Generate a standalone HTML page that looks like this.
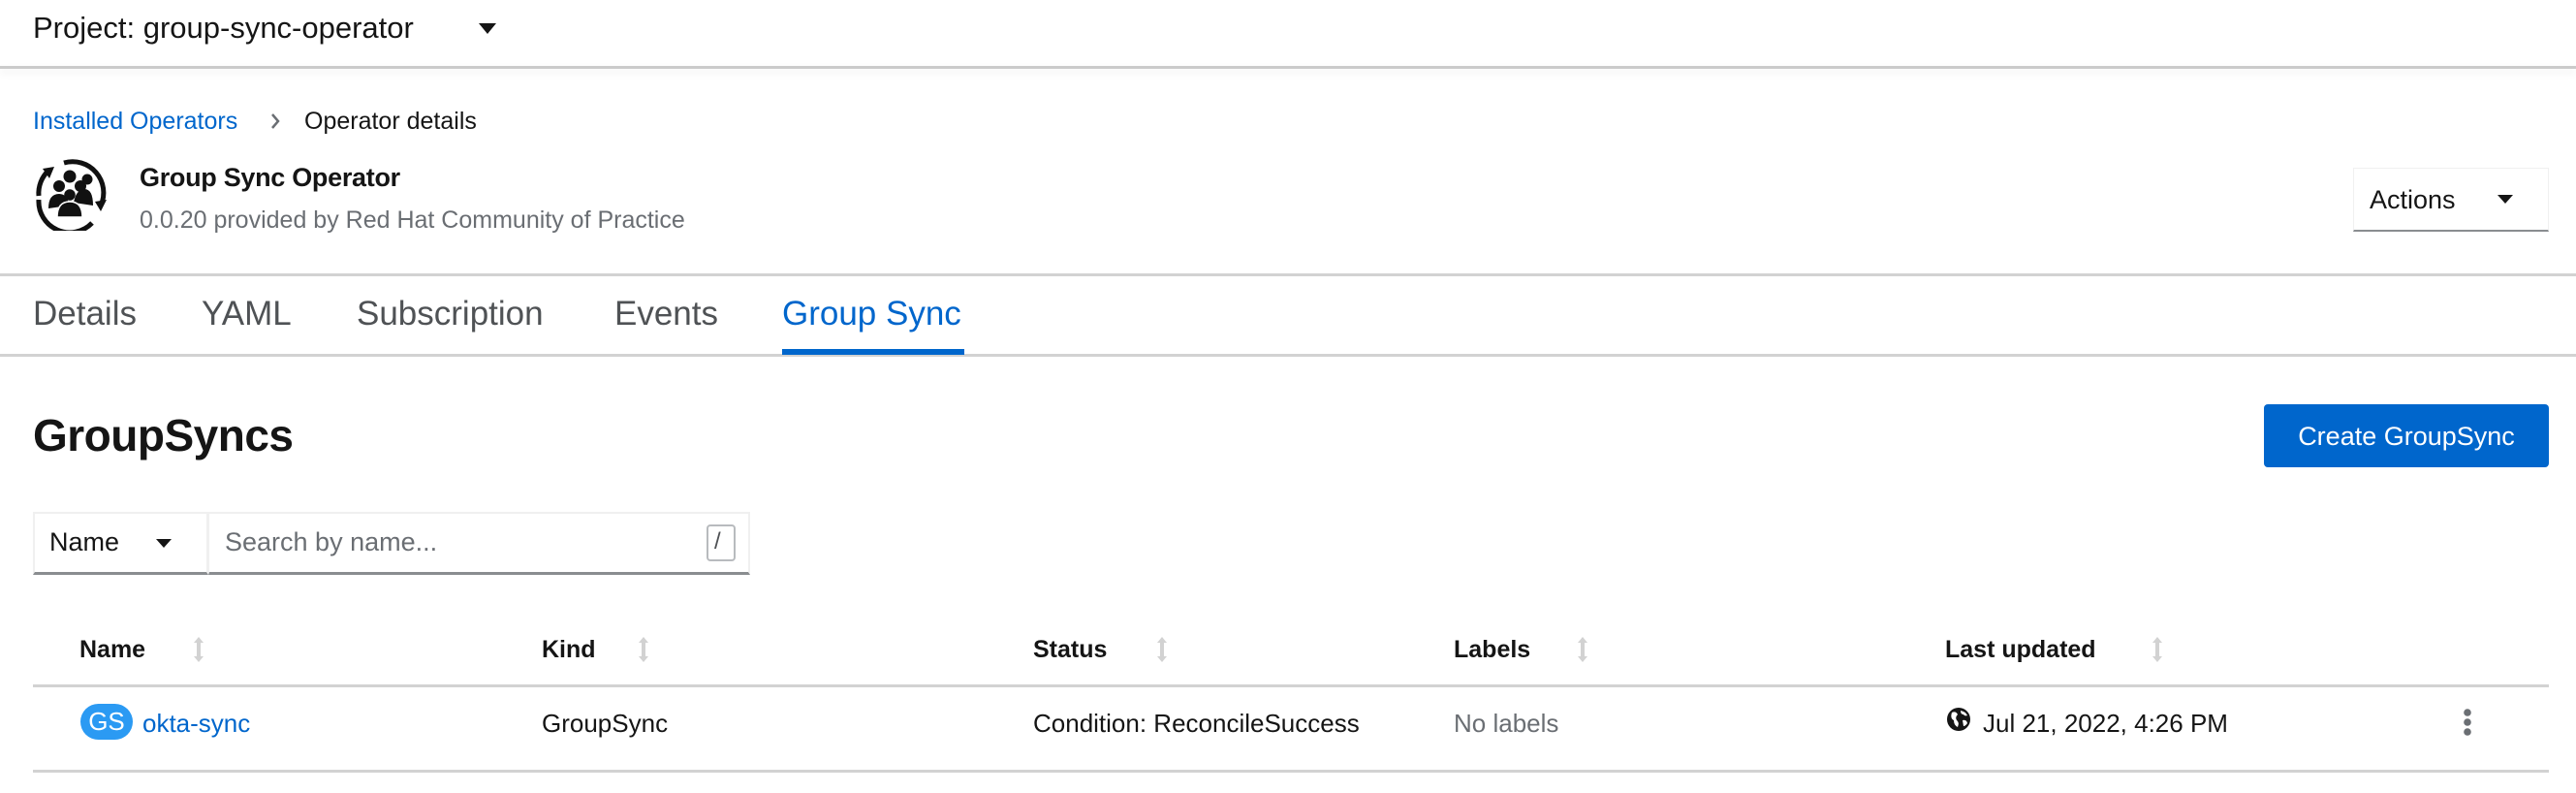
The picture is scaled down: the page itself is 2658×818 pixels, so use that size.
<!DOCTYPE html>
<html><head><meta charset="utf-8"><style>
*{margin:0;padding:0;box-sizing:border-box}
body{width:2658px;height:818px;background:#fff;position:relative;overflow:hidden;font-family:"Liberation Sans",sans-serif;color:#151515}
.a{position:absolute;white-space:nowrap}
.hl{position:absolute;height:3px;background:#d2d2d2}
.caret{position:absolute;width:0;height:0;border-left:8px solid transparent;border-right:8px solid transparent;border-top:9px solid #151515}
.sort{position:absolute;width:14px;height:30px}
</style></head><body>
<div class="a" style="left:34px;top:11px;font-size:31px;line-height:36px">Project: group-sync-operator</div>
<div class="caret" style="left:494px;top:24px;border-left-width:9px;border-right-width:9px;border-top-width:11px"></div>
<div style="position:absolute;left:0;top:68px;width:2658px;height:3px;background:#cbcbcb;box-shadow:0 4px 8px rgba(0,0,0,0.08)"></div>

<div class="a" style="left:34px;top:110px;font-size:25px;line-height:30px;color:#06c">Installed Operators</div>
<svg class="a" style="left:278px;top:115px" width="12" height="20" viewBox="0 0 12 20"><path d="M3 3 L9 10 L3 17" fill="none" stroke="#6a6e73" stroke-width="2.5"/></svg>
<div class="a" style="left:314px;top:110px;font-size:25px;line-height:30px">Operator details</div>

<svg class="a" style="left:34px;top:162px" width="78" height="76" viewBox="0 0 78 76">
<path d="M32 6 A32 32 0 0 1 70 50" fill="none" stroke="#111" stroke-width="5"/>
<path d="M64 46 L76 44 L70 56 Z" fill="#111"/>
<path d="M61 68 A32 32 0 0 1 6 44" fill="none" stroke="#111" stroke-width="5"/>
<path d="M6 40 A32 32 0 0 1 16 14" fill="none" stroke="#111" stroke-width="5"/>
<path d="M10 12 L22 10 L17 22 Z" fill="#111"/>
<circle cx="38" cy="20" r="6.5" fill="#111"/>
<circle cx="27" cy="30" r="6" fill="#111"/><circle cx="49" cy="30" r="6" fill="#111"/>
<circle cx="56" cy="23" r="5.5" fill="#111"/>
<circle cx="38" cy="39" r="6.5" stroke="#fff" stroke-width="1.5" fill="#111"/>
<path d="M16 53 Q16 38 27 38 Q36 38 37 50 Z" fill="#111"/>
<path d="M62 50 Q62 32 52 33 Q44 35 42 47 Z" fill="#111"/>
<path d="M25 62 Q25 46 38 46 Q51 46 51 62 Z" stroke="#fff" stroke-width="1.5" fill="#111"/>
</svg>
<div class="a" style="left:144px;top:167px;font-size:27px;line-height:32px;font-weight:bold;letter-spacing:-0.3px">Group Sync Operator</div>
<div class="a" style="left:144px;top:212px;font-size:25px;line-height:30px;color:#6a6e73">0.0.20 provided by Red Hat Community of Practice</div>

<div style="position:absolute;left:2428px;top:173px;width:202px;height:66px;border:1px solid #f0f0f0;border-bottom:2px solid #8a8d90"></div>
<div class="a" style="left:2445px;top:190px;font-size:27px;line-height:32px">Actions</div>
<div class="caret" style="left:2577px;top:201px"></div>

<div class="hl" style="left:0;top:282px;width:2658px"></div>
<div class="a" style="left:34px;top:304px;font-size:35px;line-height:40px;color:#4f5255">Details</div>
<div class="a" style="left:208px;top:304px;font-size:35px;line-height:40px;color:#4f5255">YAML</div>
<div class="a" style="left:368px;top:304px;font-size:35px;line-height:40px;color:#4f5255">Subscription</div>
<div class="a" style="left:634px;top:304px;font-size:35px;line-height:40px;color:#4f5255">Events</div>
<div class="a" style="left:807px;top:304px;font-size:35px;line-height:40px;color:#06c">Group Sync</div>
<div class="hl" style="left:0;top:365px;width:2658px"></div>
<div style="position:absolute;left:807px;top:360px;width:188px;height:6px;background:#06c"></div>

<div class="a" style="left:34px;top:421px;font-size:46px;line-height:56px;font-weight:bold;letter-spacing:-0.5px">GroupSyncs</div>
<div style="position:absolute;left:2336px;top:417px;width:294px;height:65px;background:#06c;border-radius:4px"></div>
<div class="a" style="left:2336px;top:434px;width:294px;text-align:center;font-size:27px;line-height:32px;color:#fff">Create GroupSync</div>

<div style="position:absolute;left:34px;top:528px;width:181px;height:65px;border:2px solid #f0f0f0;border-bottom:3px solid #8a8d90"></div>
<div style="position:absolute;left:215px;top:528px;width:559px;height:65px;border:2px solid #f0f0f0;border-bottom:3px solid #8a8d90;border-left:1px solid #f0f0f0"></div>
<div class="a" style="left:51px;top:543px;font-size:27px;line-height:32px">Name</div>
<div class="caret" style="left:161px;top:556px"></div>
<div class="a" style="left:232px;top:543px;font-size:27px;line-height:32px;color:#6a6e73">Search by name...</div>
<div style="position:absolute;left:729px;top:541px;width:30px;height:38px;border:2px solid #b8bbbe;border-radius:4px"></div>
<div class="a" style="left:737px;top:544px;font-size:24px;line-height:30px;color:#4f5255">/</div>

<div class="a" style="left:82px;top:655px;font-size:25px;line-height:30px;font-weight:bold">Name</div>
<div class="a" style="left:559px;top:655px;font-size:25px;line-height:30px;font-weight:bold">Kind</div>
<div class="a" style="left:1066px;top:655px;font-size:25px;line-height:30px;font-weight:bold">Status</div>
<div class="a" style="left:1500px;top:655px;font-size:25px;line-height:30px;font-weight:bold">Labels</div>
<div class="a" style="left:2007px;top:655px;font-size:25px;line-height:30px;font-weight:bold">Last updated</div>
<svg width="0" height="0" style="position:absolute"><defs><g id="s"><path d="M7 2 L12 8 L9 8 L9 22 L12 22 L7 28 L2 22 L5 22 L5 8 L2 8 Z" fill="#d2d2d2"/></g></defs></svg>
<svg class="sort" style="left:198px;top:655px" viewBox="0 0 14 30"><use href="#s"/></svg>
<svg class="sort" style="left:657px;top:655px" viewBox="0 0 14 30"><use href="#s"/></svg>
<svg class="sort" style="left:1192px;top:655px" viewBox="0 0 14 30"><use href="#s"/></svg>
<svg class="sort" style="left:1626px;top:655px" viewBox="0 0 14 30"><use href="#s"/></svg>
<svg class="sort" style="left:2219px;top:655px" viewBox="0 0 14 30"><use href="#s"/></svg>
<div class="hl" style="left:34px;top:706px;width:2596px"></div>

<div style="position:absolute;left:83px;top:726px;width:54px;height:37px;background:#2b9af3;border-radius:19px"></div>
<div class="a" style="left:83px;top:729px;width:54px;text-align:center;font-size:26px;line-height:30px;color:#fff">GS</div>
<div class="a" style="left:147px;top:731px;font-size:26px;line-height:30px;color:#06c">okta-sync</div>
<div class="a" style="left:559px;top:731px;font-size:26px;line-height:30px">GroupSync</div>
<div class="a" style="left:1066px;top:731px;font-size:26px;line-height:30px">Condition: ReconcileSuccess</div>
<div class="a" style="left:1500px;top:731px;font-size:26px;line-height:30px;color:#6a6e73">No labels</div>
<svg class="a" style="left:2008px;top:729px" width="26" height="26" viewBox="0 0 26 26"><circle cx="13" cy="13" r="12" fill="#151515"/><path d="M6 6 Q10 4 12 8 Q9 11 11 14 Q14 16 12 21 Q8 19 8 14 Q4 12 6 6Z M15 4 Q20 5 22 9 Q19 10 18 8 Q15 8 15 4Z M17 14 Q21 13 22 17 Q20 20 18 20 Z" fill="#fff"/></svg>
<div class="a" style="left:2046px;top:731px;font-size:26px;line-height:30px">Jul 21, 2022, 4:26 PM</div>
<svg class="a" style="left:2540px;top:730px" width="12" height="30" viewBox="0 0 12 30"><circle cx="6" cy="5" r="3.8" fill="#6a6e73"/><circle cx="6" cy="15" r="3.8" fill="#6a6e73"/><circle cx="6" cy="25" r="3.8" fill="#6a6e73"/></svg>
<div class="hl" style="left:34px;top:794px;width:2596px"></div>
</body></html>
